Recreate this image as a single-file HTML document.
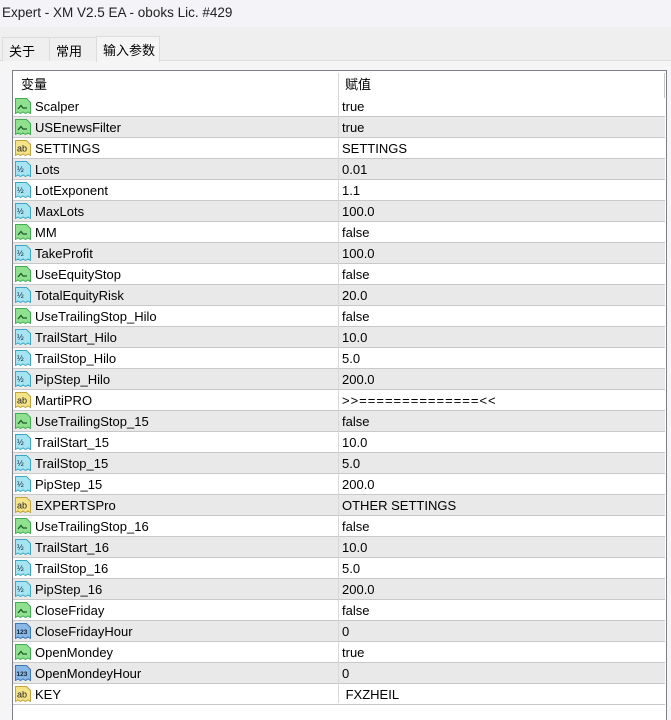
<!DOCTYPE html>
<html><head><meta charset="utf-8"><style>
*{margin:0;padding:0;box-sizing:border-box}
body{width:671px;height:714px;overflow:hidden;background:#f5f5f5;font-family:"Liberation Sans","Noto Sans CJK SC",sans-serif;font-size:13px;color:#000;position:relative}
.title{position:absolute;left:0;top:0;width:671px;height:27px;background:#f3f3f8;padding:5px 0 0 2px;font-size:13.5px;color:#222}
.tabs{position:absolute;left:0;top:27px;width:671px;height:34px;background:#efefef;border-bottom:1px solid #dcdcdc}
.tab{position:absolute;top:10px;height:24px;border:1px solid #dcdcdc;border-bottom:none;background:#efefef;padding:3px 0 0 6px;font-size:13px}
.tab.act{top:9px;height:26px;background:#f5f5f5}
.box{position:absolute;left:12px;top:70px;width:655px;height:650px;border:1px solid #7e8088;border-bottom:none;background:#fff}
.hdr{position:absolute;left:0;top:0;width:652px;height:25px;background:#fff}
.hdr span{position:absolute;top:3px}
.vline{position:absolute;left:325px;top:2px;width:1px;height:630px;background:#d8d8d8}
.row{position:absolute;left:0;width:652px;height:21px;border-bottom:1px solid #c8c8c8}
.row.g{background:#e9e9e9}
.row .n{position:absolute;left:22px;top:3px}
.row .v{position:absolute;left:329px;top:3px}
.row svg{position:absolute;left:2px;top:2px}
.sb{position:absolute;left:651px;top:2px;width:1px;height:25px;background:#c8c8c8}
</style></head><body>
<div class="title">Expert - XM V2.5 EA - oboks Lic. #429</div>
<div class="tabs">
<div class="tab" style="left:2px;width:48px">关于</div>
<div class="tab" style="left:49px;width:48px">常用</div>
<div class="tab act" style="left:96px;width:64px">输入参数</div>
</div>
<div class="box">
<div class="hdr"><span style="left:8px">变量</span><span style="left:332px">赋值</span></div>
<div class="sb"></div>
<div id="rows"></div>
<div class="vline"></div>
</div>
<svg width="0" height="0" style="position:absolute">
<defs>
<symbol id="g" viewBox="0 0 16 16"><path d="M0.5 0.5H11.5L15.5 4.5V15.5L13 14L10.5 15.5L8 14L5.5 15.5L3 14L0.5 15.5Z" fill="#8fe08f" stroke="#3fae4f"/><path d="M3 11L6 7.5L8 10H12" fill="none" stroke="#1f5a2a" stroke-width="1.3"/></symbol>
<symbol id="y" viewBox="0 0 16 16"><path d="M0.5 0.5H11.5L15.5 4.5V15.5L13 14L10.5 15.5L8 14L5.5 15.5L3 14L0.5 15.5Z" fill="#f5e38a" stroke="#c2a33a"/><text x="2" y="11.5" font-size="9" font-family="Liberation Sans" fill="#222">ab</text></symbol>
<symbol id="c" viewBox="0 0 16 16"><path d="M0.5 0.5H11.5L15.5 4.5V15.5L13 14L10.5 15.5L8 14L5.5 15.5L3 14L0.5 15.5Z" fill="#a6e4f2" stroke="#3ba7c6"/><text x="2" y="11" font-size="8" font-family="Liberation Sans" fill="#123">½</text></symbol>
<symbol id="b" viewBox="0 0 16 16"><path d="M0.5 0.5H11.5L15.5 4.5V15.5L13 14L10.5 15.5L8 14L5.5 15.5L3 14L0.5 15.5Z" fill="#8ab8e6" stroke="#3d78b8"/><text x="1.5" y="11" font-size="6.5" font-weight="bold" font-family="Liberation Sans" fill="#123">123</text></symbol>
</defs></svg>
<script>
var d=[["g","Scalper","true"],["g","USEnewsFilter","true"],["y","SETTINGS","SETTINGS"],["c","Lots","0.01"],["c","LotExponent","1.1"],["c","MaxLots","100.0"],["g","MM","false"],["c","TakeProfit","100.0"],["g","UseEquityStop","false"],["c","TotalEquityRisk","20.0"],["g","UseTrailingStop_Hilo","false"],["c","TrailStart_Hilo","10.0"],["c","TrailStop_Hilo","5.0"],["c","PipStep_Hilo","200.0"],["y","MartiPRO","<span style=\"letter-spacing:1px\">&gt;&gt;==============&lt;&lt;</span>"],["g","UseTrailingStop_15","false"],["c","TrailStart_15","10.0"],["c","TrailStop_15","5.0"],["c","PipStep_15","200.0"],["y","EXPERTSPro","OTHER SETTINGS"],["g","UseTrailingStop_16","false"],["c","TrailStart_16","10.0"],["c","TrailStop_16","5.0"],["c","PipStep_16","200.0"],["g","CloseFriday","false"],["b","CloseFridayHour","0"],["g","OpenMondey","true"],["b","OpenMondeyHour","0"],["y","KEY","&nbsp;FXZHEIL"]];
var h="";
d.forEach(function(r,i){h+='<div class="row'+(i%2?' g':'')+'" style="top:'+(25+21*i)+'px"><svg width="16" height="16"><use href="#'+r[0]+'"/></svg><span class="n">'+r[1]+'</span><span class="v">'+r[2]+'</span></div>';});
document.getElementById("rows").innerHTML=h;
</script>
</body></html>
